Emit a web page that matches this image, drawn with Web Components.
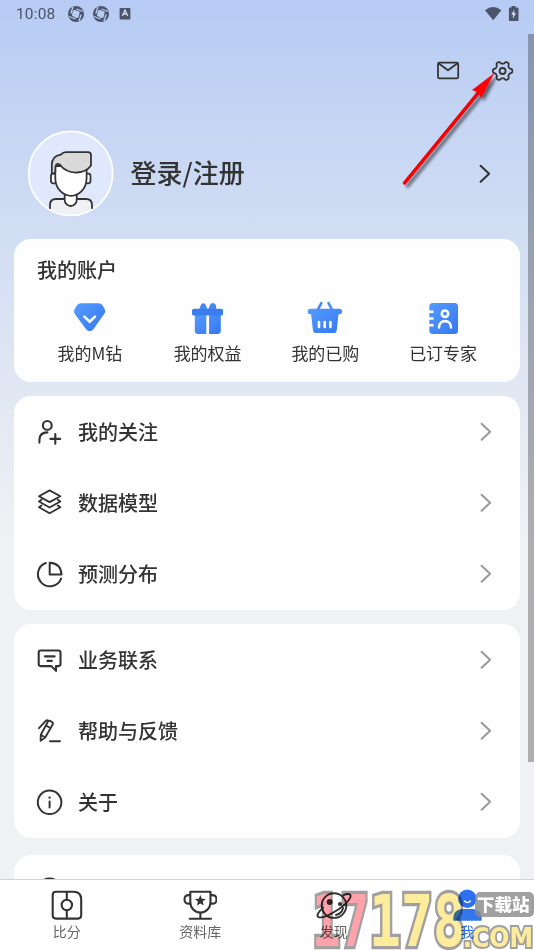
<!DOCTYPE html>
<html lang="zh-CN">
<head>
<meta charset="utf-8">
<title>我的</title>
<style>
html,body{margin:0;padding:0}
body{width:534px;height:950px;overflow:hidden;font-family:"Noto Sans CJK SC",sans-serif;color:#333}
</style>
</head>
<body>
<profile-page></profile-page>
<script>
const gear = (() => {
  let d = '';
  for (let i = 0; i < 72; i++) {
    const t = i * Math.PI / 36, r = 8.5 + 1.3 * Math.tanh(1.9 * Math.cos(6 * t));
    d += (i ? 'L' : 'M') + (502.6 + r * Math.cos(t)).toFixed(2) + ' ' + (71 + r * Math.sin(t)).toFixed(2);
  }
  return d + 'Z';
})();
const grad = '<defs><linearGradient id="g" x1="0" y1="0" x2="1" y2="1"><stop stop-color="#559cff"/><stop offset="1" stop-color="#3577f0"/></linearGradient></defs>';
const line = (w, s, c = '#333') => `<g fill="none" stroke="${c}" stroke-width="${w * 1.1}" stroke-linecap="round" stroke-linejoin="round">${s}</g>`;
const aperture = '<circle cx="8" cy="8" r="8" fill="#4b5468"/><path d="M6.300 3.800 11.800 5.800 10.600 11.200 8.500 12.300 4 9.800 4.600 5.500Z" fill="#b9cdf4"/><path d="M5 1 2.800 7.500M15 5.500 8.500 3M11 15 13.200 8.500M1 10.500 7.500 13" stroke="#b9cdf4" stroke-width="1.300"/>';
/* name: [viewBox, markup] ; one unit is one CSS pixel */
const ICONS = {
  aperture: ['0 0 16 16', aperture],
  abox: ['119 7 12 13', '<rect x="119.6" y="8" width="10.8" height="11.4" rx="1" fill="#4b5468"/><path d="m122.3 16 2.7-6 2.7 6m-4.5-2h3.6" fill="none" stroke="#d0dcf5" stroke-width="1.3"/>'],
  wifi: ['484 4 18 18', '<path d="M485 9.2Q493 2.6 501.4 9.2L493.2 19.3Z" fill="#4b5468"/>'],
  battery: ['508 4 11 18', '<path d="M511.5 5h4v1.6h2.3q.7 0 .7.8v11.8q0 .9-.8.9h-8q-.8 0-.8-.9V7.4q0-.8.7-.8h1.9Z" fill="#4b5468"/><path d="m514.5 8.5-3.3 5h2l-.6 4.2 3.5-5.5h-2Z" fill="#d6e0f5"/>'],
  mail: ['436 60 24 22', line(1.6, '<rect x="438" y="62.6" width="20.2" height="15.8" rx="1.4"/><path d="m438.8 63.5 9.2 6.8 9.2-6.8"/>')],
  gear: ['491 59 24 24', line(1.6, `<path d="${gear}"/><circle cx="502.6" cy="71" r="3"/>`)],
  chevron: ['480 422 12 22', '<path d="m481.6 424.7 8.5 8-8.5 8" fill="none" stroke="currentColor" stroke-width="2" stroke-linecap="round" stroke-linejoin="round"/>'],
  avatar: ['27 130 87 87', '<defs><clipPath id="c"><circle cx="70.7" cy="173.4" r="41"/></clipPath></defs><circle cx="70.7" cy="173.4" r="42" fill="#dfe8fc" stroke="#fff" stroke-width="1.7"/><path d="M50 209v-4q0-6 6-6h29.500q6 0 6 6v4l-8 6H58Z" fill="#eff1f5" clip-path="url(#c)"/>' +
    line(1.6, '<path d="M50 208.200V205q0-6 6-6h30q6 0 6 6v3.200"/><path d="M64.700 193v7a6 6 0 0 0 12 0v-7" fill="#fff"/><rect x="51" y="173.700" width="6" height="9.600" rx="2.200" fill="#fff"/><rect x="84.500" y="173.700" width="6" height="9.600" rx="2.200" fill="#fff"/><path d="M55.300 163v15c0 12 9 17.800 15.800 17.800S86.600 190 86.600 178v-12H56Z" fill="#fff"/><path d="M51.800 173.500v-8.500q0-9 9-10.400Q63 152.200 66 152.200h22q3 0 3 3V165.500Q86.500 172 77 172.500 66 173 59.500 164.300q-4-2-4.200 4V172q-1.200 2-3.500 1.500Z" fill="#dadada"/>')],
  diamond: ['72 301 36 35', grad + '<path d="M81 303.300h17.500q2.500 0 4 2l2.200 3.800q1.300 2.500-.6 5l-10.700 15.200q-3.700 4-7.300 0L75 314.200q-1.800-2.500-.5-5l2.500-3.900q1.500-2 4-2Z" fill="url(#g)"/><path d="m84.400 316.600 5.300 5 5.300-5" fill="none" stroke="#fff" stroke-width="2.600" stroke-linecap="round"/>'],
  gift: ['190 301 35 35', grad + '<path d="M194.800 314h26v16.500q0 3.500-3.500 3.500h-19q-3.500 0-3.500-3.500Z" fill="url(#g)"/><path d="M199 309.500 201.300 304q3.500-2 4.500 1l1.700 4.500ZM208.200 309.500l2-5q2-3 4.700-.4l1.200 1.200v4.200Z" fill="#4687f6"/><rect x="192" y="308.700" width="31" height="6.800" rx="1.700" fill="#3b7dee"/><path d="M207.700 315.500V334" stroke="#fff" stroke-width="2.800"/>'],
  basket: ['307 300 38 35', grad + '<path d="M311.500 307.700h28.800a2.800 2.800 0 0 1 0 5.600h-.8l-1.700 15.600q-.3 3.100-3.300 3.100h-17.300q-3 0-3.300-3.100l-1.800-15.600h-.6a2.800 2.800 0 0 1 0-5.600Z" fill="url(#g)"/><path d="m322.300 302.200-3.500 6.500m10.700-6.500 3.500 6.500" stroke="#468bf7" stroke-width="2.600" stroke-linecap="round"/><path d="M320 321v5m5.700-5v5m5.700-5v5" stroke="#fff" stroke-width="2.600" stroke-linecap="round"/>'],
  book: ['427 300 32 35', grad + '<rect x="429.300" y="302" width="28.700" height="31" rx="3.500" fill="url(#g)"/><g fill="none" stroke="#fff" stroke-width="2.600"><path d="M429 310.800h4.500m-4.500 6.700h4.500m-4.500 6.800h4.500" stroke-linecap="butt"/><circle cx="445" cy="312.700" r="3.200"/><path d="M439 326.500c0-8.500 12-8.500 12 0" stroke-linecap="round"/></g>'],
  follow: ['36 417 28 30', line(1.9, '<circle cx="47.300" cy="425.400" r="4.400"/><path d="M39.400 442.600V440q0-7.600 8-7.600M50.400 438.900h9.800m-4.900-4.900v9.800"/>')],
  layers: ['36 489 28 29', line(1.700, '<path d="m49.600 491.400 10.700 5.800-10.700 5.900-10.600-5.900ZM41.500 500.700l-2.500 1.800 10.600 6 10.700-6-2.500-1.800M41.500 506.500l-2.500 1.800 10.600 6 10.700-6-2.500-1.800"/>')],
  pie: ['36 560 28 29', line(1.800, '<path d="M45.800 563a12 12 0 1 0 15.300 15.600M49.700 562.800v11.800h11.800q-.6-11.200-11.800-11.800Z"/>')],
  chat: ['36 646 28 28', line(1.900, '<path d="M40.500 650.500h18q2 0 2 2v11.600q0 2-2 2H56v4.800l-4.600-4.800H40.700q-2 0-2-2v-11.600q0-2 1.800-2ZM45 656.400h9.600M47.500 660.900h4.300"/>')],
  pen: ['36 717 28 28', line(1.700, '<path d="M39 728.200l6.500-7q1.400-1.400 2.500-.6M40.800 734.800l6.800-12.500q1.300-2.300 3.200-1.100l1.200.8q1.500 1 .5 2.700L45.200 737.500l-4.600 3.300ZM40.800 734.800l4.400 2.700M46 725.500l4.700 2.700M50 741.300h10"/>')],
  info: ['36 789 28 27', line(1.800, '<circle cx="49.600" cy="802.300" r="11.800"/><path d="M49.600 801.400v6"/>') + '<circle cx="49.600" cy="797.600" r="1.200" fill="#333"/>'],
  score: ['50 888 34 33', line(1.900, '<path d="M56 891.800h17.500q7.700 0 7.700 7.700v15.800q0 3.300-3.300 3.300H56q-3.300 0-3.300-3.300v-20.200q0-3.300 3.300-3.300ZM66.800 891.800v8M66.800 910v8.600"/><circle cx="66.800" cy="905" r="5.200"/>')],
  cup: ['183 888 34 33', line(1.900, '<path d="M190.300 891.800h20.200V902c0 6-4.500 10.600-10.100 10.600S190.300 908 190.300 902ZM200.400 912.600v6M189.800 918.700h21.200M190 895.200q-5.500-.7-5.500 4.300t5.500 4M211 895.200q5.500-.7 5.500 4.300t-5.500 4"/>') + '<path d="m200.300 895 1.500 3.700 4 .3-3.100 2.600 1 3.900-3.400-2.100-3.400 2.100 1-3.900-3.100-2.600 4-.3Z" fill="#333"/>'],
  planet: ['316 888 36 33', line(1.700, '<circle cx="334" cy="905.600" r="12.300"/><path d="M323 907.700c-5 4.600-6.500 7.700-5 9 3 2.700 13.700-2.600 21-7.600 8-5.700 13.600-12.300 11-14.600q-1.800-1.300-6.500.7M336 915q6-1.500 7-7"/>') + '<circle cx="329.700" cy="902" r="3" fill="#333"/><circle cx="340" cy="904" r="2.100" fill="#333"/>'],
  me: ['452 888 31 33', '<path d="M453.300 920v-2.500q0-7.500 8.500-8.500h11.400q8.500 1 8.500 8.500v2.500q0 .8-1 .8h-26.400q-1 0-1-.8Z" fill="#3576ea"/><circle cx="467.300" cy="898.800" r="9.200" fill="#2d6ff0"/><path d="M464.500 901q3 2.800 6 0" fill="none" stroke="#fff" stroke-width="1.400" stroke-linecap="round"/>']
};
const define = (name, html) => customElements.define(name, class extends HTMLElement {
  constructor() {
    super();
    const t = document.createElement('template');
    t.innerHTML = typeof html === 'function' ? html(this) : html;
    this.attachShadow({mode: 'open'}).append(t.content.cloneNode(true));
  }
});

customElements.define('ui-icon', class extends HTMLElement {
  connectedCallback() {
    if (this.shadowRoot) return;
    const [vb, body] = ICONS[this.getAttribute('name')], [, , w, h] = vb.split(' ');
    this.attachShadow({mode: 'open'}).innerHTML = `<style>:host{display:block;flex:none}svg{display:block}</style><svg width="${w}" height="${h}" viewBox="${vb}">${body}</svg>`;
  }
});

define('status-bar', `<style>
:host{display:flex;flex:none;height:28px;box-sizing:border-box;padding:0 15px 0 16px;align-items:center;color:#4b5468;font:15.5px/28px Roboto,sans-serif}
.time{width:60px;letter-spacing:.15px}.gap{flex:1}
ui-icon{margin-top:-1px}
</style><span class="time">10:08</span><ui-icon name="aperture" style="margin-left:-8px"></ui-icon><ui-icon name="aperture" style="margin-left:8.500px"></ui-icon><ui-icon name="abox" style="margin-left:10.500px"></ui-icon><span class="gap"></span><ui-icon name="wifi"></ui-icon><ui-icon name="battery" style="margin-left:6px"></ui-icon>`);

define('profile-header', `<style>
:host{display:flex;flex-direction:column;flex:none;height:211px}
.tools{display:flex;justify-content:flex-end;align-items:center;gap:31px;height:86px;padding-right:19px}
.user{display:flex;align-items:center;padding:0 43.500px 0 27px;height:87px;margin-top:16px}
h1{margin:-3px auto 0 16.500px;font-size:26px;font-weight:500;line-height:38px}
</style><div class="tools"><ui-icon name="mail"></ui-icon><ui-icon name="gear"></ui-icon></div>
<div class="user"><ui-icon name="avatar"></ui-icon><h1>登录/注册</h1><ui-icon name="chevron"></ui-icon></div>`);

define('ui-card', `<style>:host{display:block;flex:none;background:#fefefe;border-radius:17px;margin:0 14px 14px;overflow:hidden}</style><slot></slot>`);

define('account-panel', `<style>
:host{display:block;height:143px}
h2{margin:0;padding:16px 0 0 23px;font-size:20px;font-weight:500;line-height:30px}
.grid{display:grid;grid-template-columns:repeat(4,1fr);padding:0 18px 0 17px;margin-top:16px}
</style><h2>我的账户</h2><div class="grid"><slot></slot></div>`);

define('account-tile', e => `<style>
:host{display:flex;flex-direction:column;align-items:center;font-size:17px;line-height:26px}
span{margin-top:4px}
</style><ui-icon name="${e.getAttribute('icon')}"></ui-icon><span><slot></slot></span>`);

define('menu-row', e => `<style>
:host{display:flex;align-items:center;height:71.330px;padding:0 28px 0 22px;font-size:20px;font-weight:500;line-height:30px}
span{margin:0 auto 0 14px}ui-icon.c{color:#999}
</style><ui-icon name="${e.getAttribute('icon')}"></ui-icon><span><slot></slot></span><ui-icon class="c" name="chevron"></ui-icon>`);

define('tab-item', e => `<style>
:host{flex:1;display:flex;flex-direction:column;align-items:center;padding-top:8px;font-size:14px;line-height:20px;color:#666}
:host([active]){color:#2f6fe8}
</style><ui-icon name="${e.getAttribute('icon')}"></ui-icon><span><slot></slot></span>`);

define('tab-bar', `<style>:host{display:flex;height:71px;flex:none;box-sizing:border-box;background:#fff;border-top:1px solid #d2d2d2;position:relative}</style><slot></slot>`);

define('pointer-arrow', `<style>:host{position:absolute;left:395px;top:65px}svg{display:block}</style>
<svg width="115" height="130" viewBox="395 65 115 130"><defs><filter id="s" x="-20%" y="-20%" width="150%" height="150%"><feDropShadow dx="3" dy="3" stdDeviation="1.700" flood-color="#111" flood-opacity=".6"/></filter></defs>
<g filter="url(#s)"><path d="M404.500 183 479 92" stroke="#b01020" stroke-width="3.400" stroke-linecap="round"/><path d="M404.500 183 479 92" stroke="#fe0000" stroke-width="2.900" stroke-linecap="round"/><path d="m493.500 74-21 16 6 2.200 2.600 5.400Z" fill="#fe0000" stroke="#fe0000" stroke-width=".6"/></g></svg>`);

define('site-mark', `<style>
:host{position:absolute;left:308px;top:885px;mix-blend-mode:multiply}
svg{display:block}text{font-family:"DejaVu Sans Mono",monospace;font-weight:700;stroke:#a0a0a0;paint-order:stroke;stroke-linejoin:miter}
.b{font-family:"DejaVu Sans",sans-serif}
</style><svg width="226" height="65" viewBox="308 885 226 65">
<g stroke-width="6.500" font-size="72"><text x="312" y="945.500" fill="#ffa2aa" textLength="57" lengthAdjust="spacingAndGlyphs">17</text><text x="369" y="945.500" fill="#feeb9c" textLength="96" lengthAdjust="spacingAndGlyphs">178</text></g>
<text class="b" x="463" y="946.500" font-size="26" stroke-width="4" fill="#feeb9c" textLength="70" lengthAdjust="spacingAndGlyphs">.COM</text></svg>`);

define('site-badge', `<style>
:host{position:absolute;left:475px;top:892px;width:59px;height:25px;box-sizing:border-box;padding-left:2px;border-radius:5px;background:rgba(139,139,139,.82);color:#fff;font-size:17.500px;line-height:24px;font-weight:900;white-space:nowrap}
</style><slot></slot>`);

define('profile-page', `<style>
:host{display:flex;flex-direction:column;position:relative;width:534px;height:950px;overflow:hidden;background:linear-gradient(#b7cbf4 0,#d2def3 240px,#e2e8f3 400px,#eff1f4 540px)}
main{flex:1;min-height:0;overflow:hidden;display:flex;flex-direction:column}
.thumb{position:absolute;right:0;top:34px;width:6px;height:728px;background:rgba(0,0,0,.28)}
</style>
<status-bar></status-bar>
<main><profile-header></profile-header>
<ui-card><account-panel><account-tile icon="diamond">我的M钻</account-tile><account-tile icon="gift">我的权益</account-tile><account-tile icon="basket">我的已购</account-tile><account-tile icon="book">已订专家</account-tile></account-panel></ui-card>
<ui-card><menu-row icon="follow">我的关注</menu-row><menu-row icon="layers">数据模型</menu-row><menu-row icon="pie">预测分布</menu-row></ui-card>
<ui-card style="margin-bottom:17px"><menu-row icon="chat">业务联系</menu-row><menu-row icon="pen">帮助与反馈</menu-row><menu-row icon="info">关于</menu-row></ui-card>
<ui-card><menu-row icon="info"></menu-row></ui-card></main>
<tab-bar><tab-item icon="score">比分</tab-item><tab-item icon="cup">资料库</tab-item><tab-item icon="planet">发现</tab-item><tab-item icon="me" active>我</tab-item></tab-bar>
<div class="thumb"></div><pointer-arrow></pointer-arrow><site-mark></site-mark><site-badge>下载站</site-badge>`);
</script>
</body>
</html>
